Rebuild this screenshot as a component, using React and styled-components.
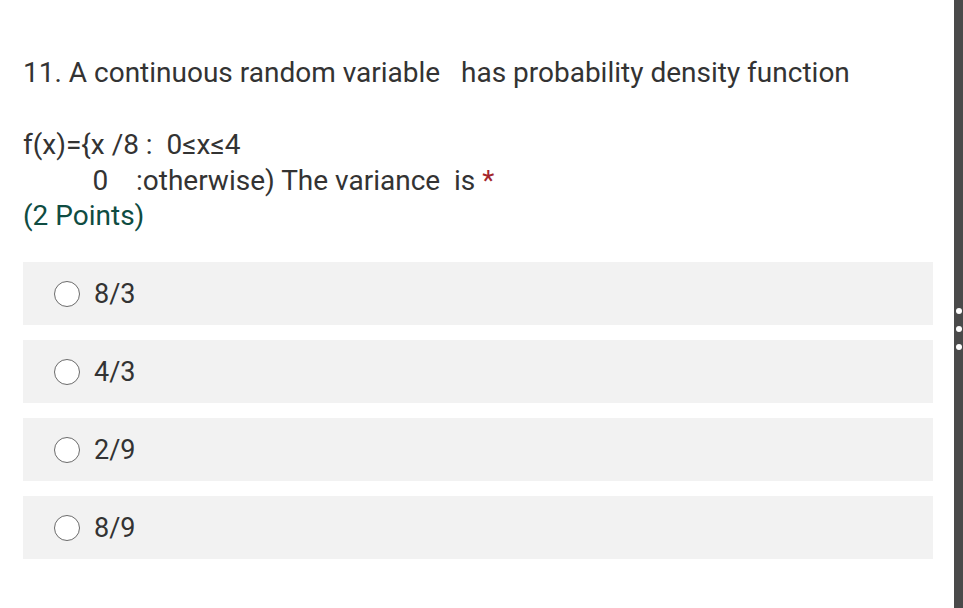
import React from "react";
import styled, { createGlobalStyle } from "styled-components";

const Global = createGlobalStyle`
  html, body { margin: 0; padding: 0; background: #fff; }
  body { font-family: Roboto, "Noto Sans", sans-serif; overflow: hidden; }
`;

const Page = styled.div`
  display: flex;
  width: 963px;
  height: 608px;
`;

const Main = styled.div`
  flex: 1;
  padding: 55px 21px 0 23px;
  box-sizing: border-box;
`;

const Title = styled.div`
  font-size: 28px;
  line-height: 36px;
  color: #333;
  white-space: pre;
`;

const Star = styled.span`
  color: #a4262c;
`;

const Points = styled.div`
  color: #0f4c42;
  font-size: 28px;
  line-height: 33px;
`;

const Options = styled.div`
  display: flex;
  flex-direction: column;
  gap: 15px;
  margin-top: 30px;
`;

const Option = styled.label`
  display: flex;
  align-items: center;
  height: 63px;
  background: #f2f2f2;
  padding-left: 31px;
  gap: 14px;
  font-size: 27px;
  color: #333;
`;

const Radio = styled.span`
  width: 24px;
  height: 24px;
  border: 1.6px solid #6b6b6b;
  border-radius: 50%;
  background: #fff;
  flex: none;
`;

const Scroll = styled.div`
  width: 9px;
  background: #4a4a4a;
  display: flex;
  flex-direction: column;
  align-items: center;
  justify-content: flex-start;
  padding-top: 308px;
  gap: 12px;
  box-sizing: border-box;
`;

const Dot = styled.span`
  width: 6px;
  height: 6px;
  border-radius: 50%;
  background: #fff;
`;

const opts = ["8/3", "4/3", "2/9", "8/9"];

export default function App() {
  return (
    <Page>
      <Global />
      <Main>
        <Title>
          {"11. A continuous random variable   has probability density function\n\nf(x)={x /8 :  0≤x≤4\n          0    :otherwise) The variance  is "}
          <Star>*</Star>
        </Title>
        <Points>(2 Points)</Points>
        <Options>
          {opts.map((o) => (
            <Option key={o}>
              <Radio />
              {o}
            </Option>
          ))}
        </Options>
      </Main>
      <Scroll>
        <Dot />
        <Dot />
        <Dot />
      </Scroll>
    </Page>
  );
}
